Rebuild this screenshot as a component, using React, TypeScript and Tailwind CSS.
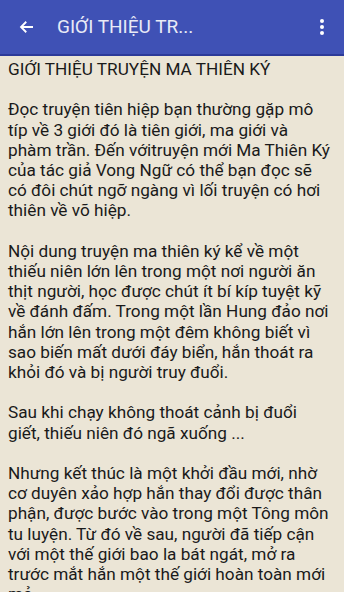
const paragraphs = [
  ["GIỚI THIỆU TRUYỆN MA THIÊN KÝ"],
  [
    "Đọc truyện tiên hiệp bạn thường gặp mô",
    "típ về 3 giới đó là tiên giới, ma giới và",
    "phàm trần. Đến vớitruyện mới Ma Thiên Ký",
    "của tác giả Vong Ngữ có thể bạn đọc sẽ",
    "có đôi chút ngỡ ngàng vì lối truyện có hơi",
    "thiên về võ hiệp.",
  ],
  [
    "Nội dung truyện ma thiên ký kể về một",
    "thiếu niên lớn lên trong một nơi người ăn",
    "thịt người, học được chút ít bí kíp tuyệt kỹ",
    "về đánh đấm. Trong một lần Hung đảo nơi",
    "hắn lớn lên trong một đêm không biết vì",
    "sao biến mất dưới đáy biển, hắn thoát ra",
    "khỏi đó và bị người truy đuổi.",
  ],
  ["Sau khi chạy không thoát cảnh bị đuổi", "giết, thiếu niên đó ngã xuống ..."],
  [
    "Nhưng kết thúc là một khởi đầu mới, nhờ",
    "cơ duyên xảo hợp hắn thay đổi được thân",
    "phận, được bước vào trong một Tông môn",
    "tu luyện. Từ đó về sau, người đã tiếp cận",
    "với một thế giới bao la bát ngát, mở ra",
    "trước mắt hắn một thế giới hoàn toàn mới",
    "mẻ.",
  ],
];

export default function App() {
  return (
    <div className="w-[344px] h-[592px] overflow-hidden bg-[#ebe5d6] font-['Roboto',sans-serif]">
      <header className="h-[56px] bg-[#3f51b5] border-b-2 border-[#2c3a99] flex items-center text-white">
        <button className="w-[54px] h-full flex items-center justify-center">
          <svg width="18" height="18" viewBox="0 0 24 24" fill="none" stroke="white" strokeWidth="2.4">
            <path d="M20 12H5M11 5l-7 7 7 7" />
          </svg>
        </button>
        <h1 className="ml-[3px] flex-1 text-[19px] font-normal text-[#e8eaf6]">GIỚI THIỆU TR...</h1>
        <button className="w-[44px] h-full flex items-center justify-center">
          <svg width="6" height="18" viewBox="0 0 6 18" fill="white">
            <circle cx="3" cy="3" r="2" />
            <circle cx="3" cy="9" r="2" />
            <circle cx="3" cy="15" r="2" />
          </svg>
        </button>
      </header>
      <div className="px-[8px] pt-[3px] text-[17.2px] leading-[20.2px] text-[#1a1a1a] whitespace-nowrap">
        {paragraphs.map((lines, i) => (
          <p key={i} className="mb-[20.2px]">
            {lines.map((l, j) => (
              <span key={j} className="block">
                {l}
              </span>
            ))}
          </p>
        ))}
      </div>
    </div>
  );
}
